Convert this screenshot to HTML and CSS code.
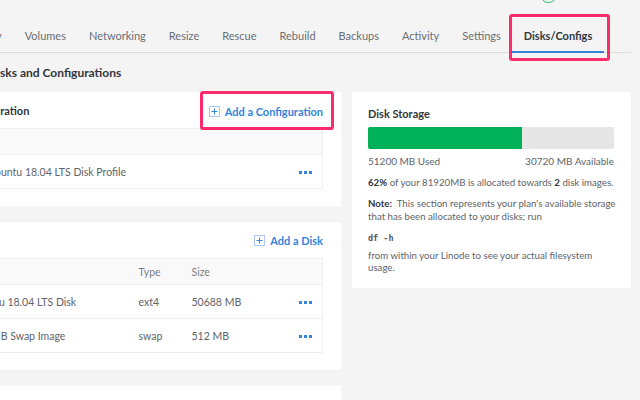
FILE: index.html
```html
<!DOCTYPE html>
<html>
<head>
<meta charset="utf-8">
<link rel="stylesheet" href="styles.css">
</head>
<body>
<div class="ring"></div>
<div class="page">
  <nav class="tabs">
    <a class="tab">Summary</a>
    <a class="tab">Volumes</a>
    <a class="tab">Networking</a>
    <a class="tab">Resize</a>
    <a class="tab">Rescue</a>
    <a class="tab">Rebuild</a>
    <a class="tab">Backups</a>
    <a class="tab">Activity</a>
    <a class="tab">Settings</a>
    <a class="tab active">Disks/Configs</a>
  </nav>
  <h1 class="heading">Disks and Configurations</h1>
  <div class="grid">
    <div class="col">
      <section class="panel">
        <div class="panel-head">
          <h2 class="panel-title">Configuration</h2>
          <a class="add"><svg class="plus" viewBox="0 0 11 11" width="11" height="11"><rect x="0.5" y="0.5" width="10" height="10" fill="none" stroke="#a9c8ef"/><path d="M5.5 2.5v6M2.5 5.5h6" stroke="#3683dc" stroke-width="1"/></svg>Add a Configuration</a>
        </div>
        <table class="tbl">
          <colgroup><col class="c-label"><col></colgroup>
          <thead><tr><th>Label</th><th></th></tr></thead>
          <tbody>
            <tr><td>My Ubuntu 18.04 LTS Disk Profile</td><td class="act"><span class="dots"><i></i><i></i><i></i></span></td></tr>
          </tbody>
        </table>
      </section>
      <section class="panel panel-disks">
        <div class="panel-head">
          <h2 class="panel-title">Disks</h2>
          <a class="add"><svg class="plus" viewBox="0 0 11 11" width="11" height="11"><rect x="0.5" y="0.5" width="10" height="10" fill="none" stroke="#a9c8ef"/><path d="M5.5 2.5v6M2.5 5.5h6" stroke="#3683dc" stroke-width="1"/></svg>Add a Disk</a>
        </div>
        <table class="tbl">
          <colgroup><col class="c-label"><col class="c-type"><col class="c-size"><col></colgroup>
          <thead><tr><th>Label</th><th>Type</th><th>Size</th><th></th></tr></thead>
          <tbody>
            <tr><td>Ubuntu 18.04 LTS Disk</td><td>ext4</td><td>50688 MB</td><td class="act"><span class="dots"><i></i><i></i><i></i></span></td></tr>
            <tr><td>512 MB Swap Image</td><td>swap</td><td>512 MB</td><td class="act"><span class="dots"><i></i><i></i><i></i></span></td></tr>
          </tbody>
        </table>
      </section>
      <section class="panel panel-more"></section>
    </div>
    <aside class="panel storage">
      <h3 class="st-title">Disk Storage</h3>
      <div class="bar"><div class="bar-fill" style="width:62.6%"></div></div>
      <div class="bar-labels"><span>51200 MB Used</span><span>30720 MB Available</span></div>
      <p class="st-p"><b>62%</b> of your 81920MB is allocated towards <b>2</b> disk images.</p>
      <p class="st-p"><b>Note:</b>&nbsp; This section represents your plan's available storage that has been allocated to your disks; run</p>
      <p class="st-p"><code>df -h</code></p>
      <p class="st-p st-tight">from within your Linode to see your actual filesystem usage.</p>
    </aside>
  </div>
</div>
<div class="callout callout-tab"></div>
<div class="callout callout-add"></div>
</body>
</html>
```
FILE: styles.css
```css
html, body {
  margin: 0;
  padding: 0;
}
body {
  width: 640px;
  height: 400px;
  overflow: hidden;
  position: relative;
  background: #f4f4f4;
  font-family: Lato, "Open Sans", sans-serif;
  color: #32363c;
}
.page {
  margin-left: -60px;
  width: 691px;
}
.tabs {
  display: flex;
  align-items: flex-end;
  height: 52px;
  border-bottom: 1px solid #dcdcdc;
  padding-left: 5px;
}
.tab {
  font-size: 11px;
  line-height: 16px;
  color: #6a6e73;
  padding: 0 11.5px 7px;
  border-bottom: 2px solid transparent;
  margin-bottom: -1px;
}
.tab.active {
  font-weight: 700;
  color: #32363c;
  border-bottom-color: #3683dc;
}
.heading {
  margin: 10px 0 9px 48px;
  font-size: 12px;
  line-height: 20px;
  font-weight: 700;
}
.grid {
  display: grid;
  grid-template-columns: 401px 279px;
  column-gap: 11px;
  align-items: start;
}
.col {
  display: flex;
  flex-direction: column;
  gap: 16px;
}
.panel {
  background: #fff;
}
.col .panel {
  padding: 0 18px 17px 22px;
}
.panel-head {
  height: 36px;
  display: flex;
  align-items: center;
  justify-content: space-between;
}
.panel-title {
  margin: 0;
  font-size: 11px;
  font-weight: 700;
}
.add {
  display: flex;
  align-items: center;
  gap: 5px;
  color: #3683dc;
  font-size: 11px;
  font-weight: 700;
  padding-top: 3px;
}
.panel-disks .add {
  padding-top: 1px;
}
.plus {
  display: block;
}
.tbl {
  width: 361px;
  table-layout: fixed;
  border-collapse: collapse;
  font-size: 10.5px;
  border: 1px solid #efefef;
}
.c-label { width: 169px; }
.c-type { width: 53px; }
.c-size { width: 90px; }
.tbl th {
  background: #f9f9f9;
  height: 25px;
  padding: 0 7px;
  text-align: left;
  font-weight: 400;
  color: #7a7e83;
  border-bottom: 1px solid #efefef;
}
.tbl td {
  height: 33px;
  padding: 0 7px;
  color: #606469;
  white-space: nowrap;
  border-bottom: 1px solid #efefef;
}
.tbl td.act {
  text-align: right;
  padding-right: 10px;
}
.dots {
  display: inline-flex;
  gap: 2px;
  vertical-align: middle;
}
.dots i {
  width: 3px;
  height: 3px;
  background: #3683dc;
  display: block;
}
.panel-more {
  height: 40px;
}
.storage {
  padding: 15px 17px 15px 16px;
}
.st-title {
  margin: 0;
  font-size: 11px;
  line-height: 14px;
  font-weight: 700;
}
.bar {
  margin-top: 6px;
  height: 22px;
  background: #e6e6e6;
  border-radius: 2px;
  overflow: hidden;
}
.bar-fill {
  height: 100%;
  background: #00b159;
}
.bar-labels {
  display: flex;
  justify-content: space-between;
  margin-top: 5px;
  font-size: 10px;
  line-height: 14px;
  color: #606469;
}
.st-p {
  margin: 8px -4px 0 0;
  font-size: 9.7px;
  line-height: 13px;
  color: #606469;
}
.st-p.st-tight {
  margin-top: 4px;
  line-height: 12px;
}
.st-p b {
  color: #32363c;
}
.st-p code {
  font-family: "DejaVu Sans Mono", monospace;
  font-size: 8.5px;
  font-weight: 700;
  color: #555;
}
.ring {
  position: absolute;
  left: 540px;
  top: -14px;
  width: 15px;
  height: 15px;
  border: 1.5px solid #2ac46a;
  border-radius: 50%;
}
.callout {
  position: absolute;
  border: 3.5px solid #fb2c6c;
  border-radius: 3px;
  box-sizing: border-box;
}
.callout-tab {
  left: 509px;
  top: 14px;
  width: 101px;
  height: 47px;
}
.callout-add {
  left: 200px;
  top: 91px;
  width: 134px;
  height: 39px;
}
```
